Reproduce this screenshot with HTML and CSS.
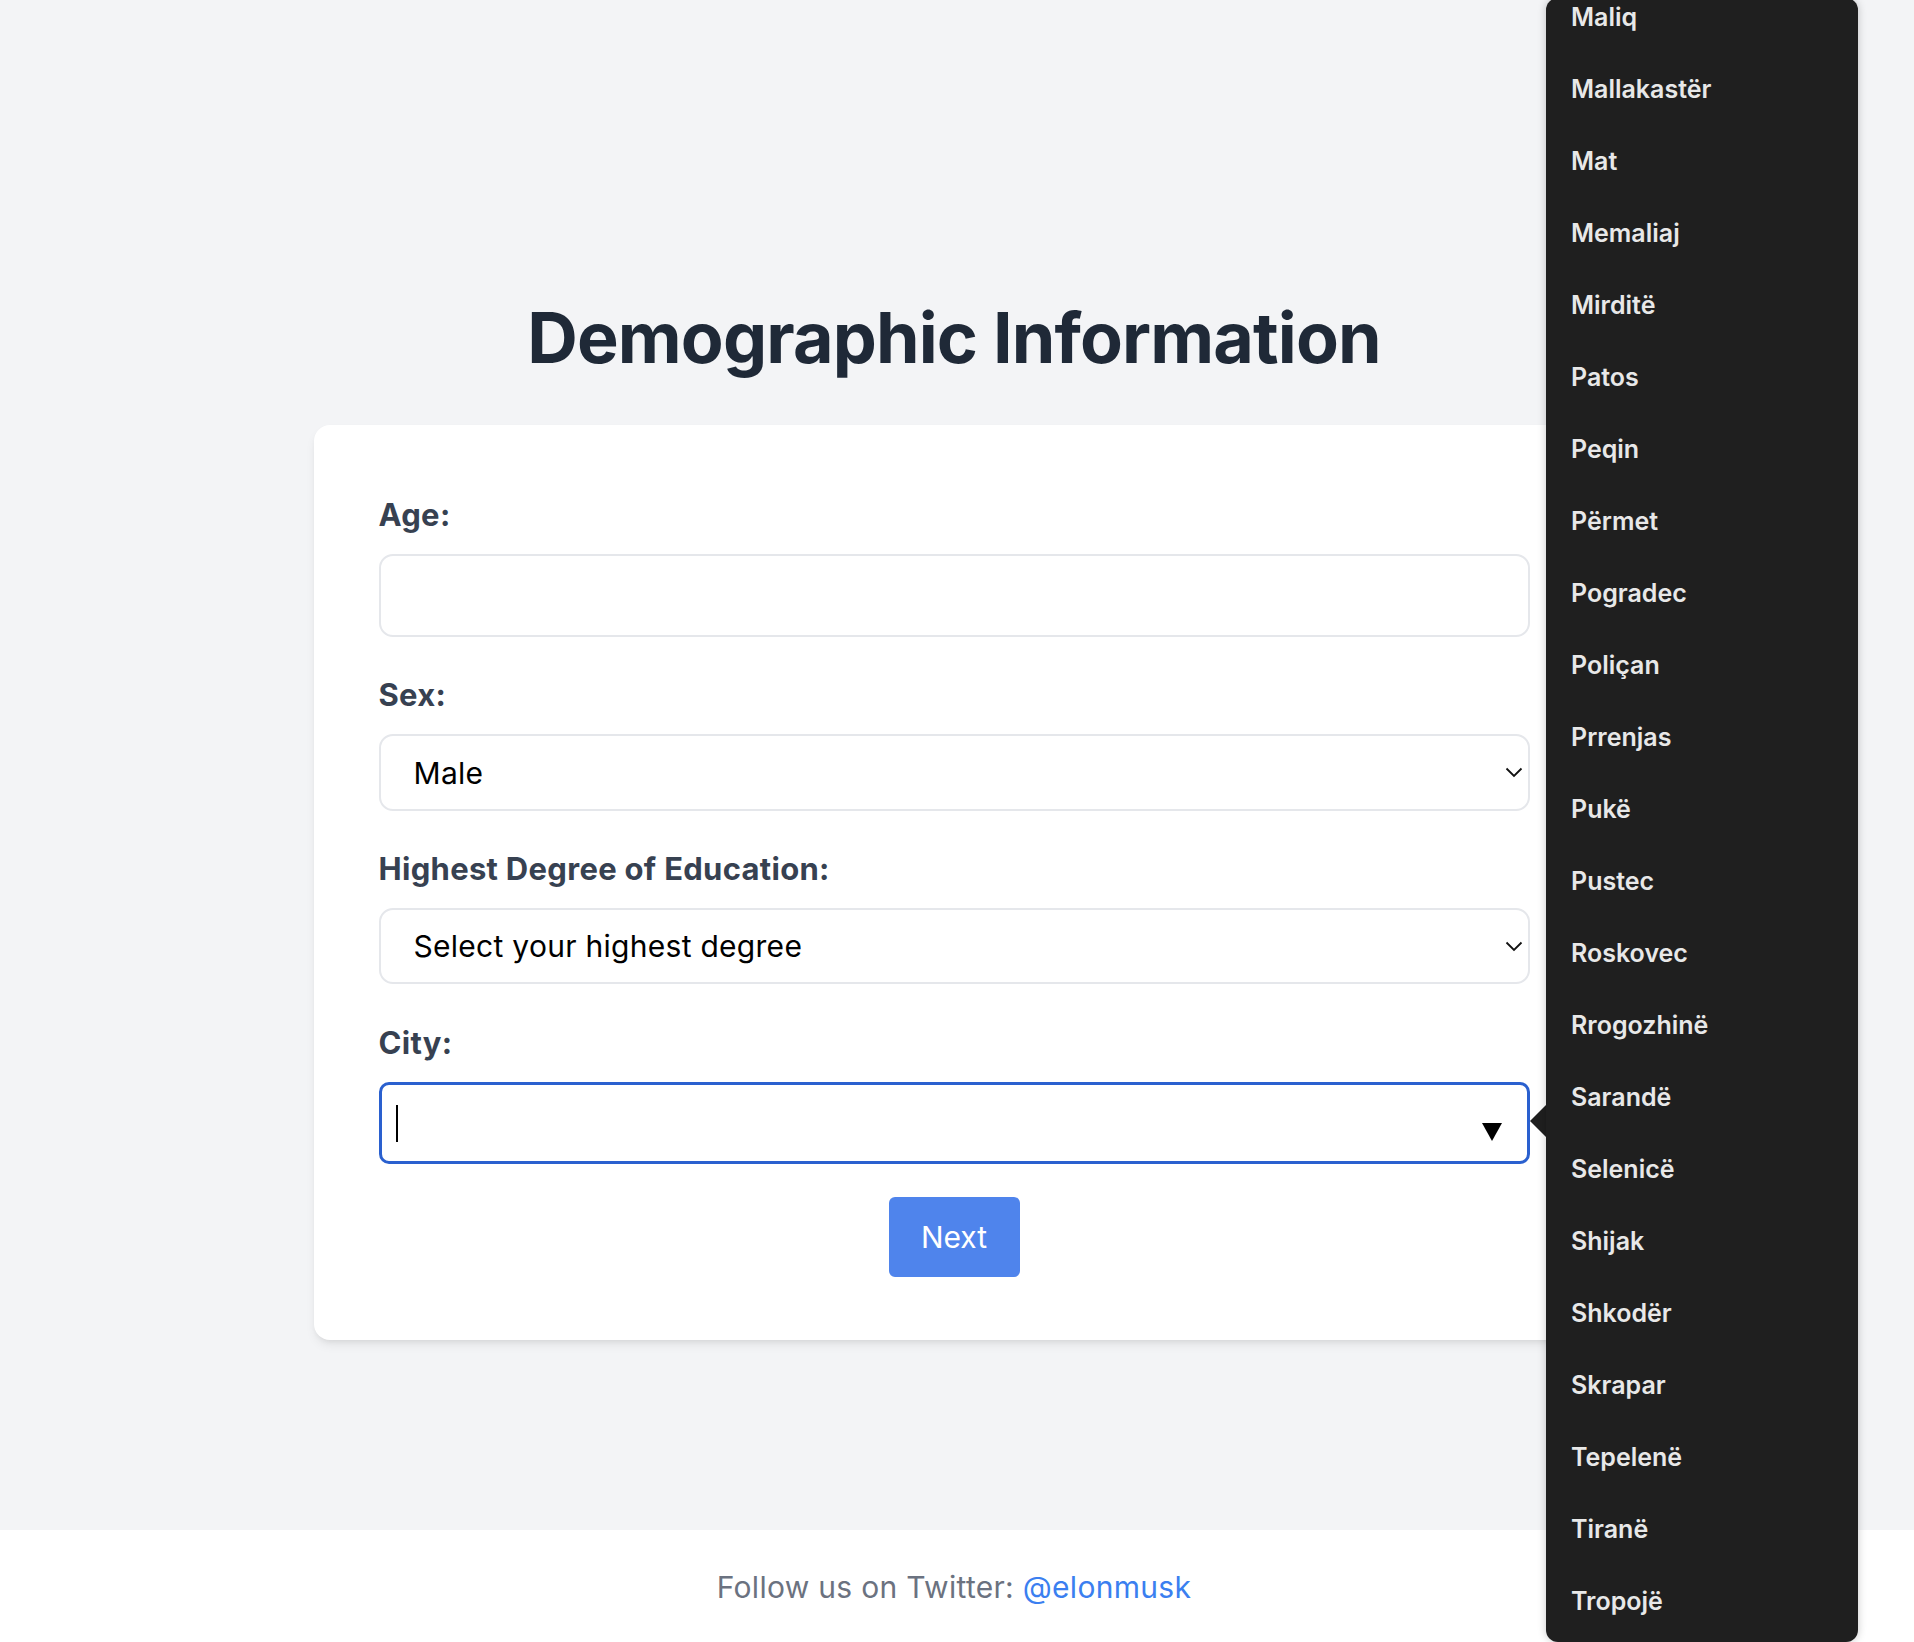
FILE: index.html
```html
<!DOCTYPE html>
<html lang="en">
<head>
<meta charset="utf-8">
<title>Demographic Information</title>
<link rel="stylesheet" href="styles.css">
</head>
<body>
<main class="page">
  <h1 class="title">Demographic Information</h1>
  <form class="card">
    <label class="label" for="age">Age:</label>
    <input class="field field-age" id="age" type="text">

    <label class="label" for="sex">Sex:</label>
    <div class="select-wrap">
      <select class="field field-select" id="sex">
        <option>Male</option>
        <option>Female</option>
      </select>
      <svg class="chevron" width="18" height="11" viewBox="0 0 18 11"><path d="M1.5 1.5 L9 9 L16.5 1.5" fill="none" stroke="#111" stroke-width="1.8"/></svg>
    </div>

    <label class="label" for="edu">Highest Degree of Education:</label>
    <div class="select-wrap select-wrap-edu">
      <select class="field field-select" id="edu">
        <option>Select your highest degree</option>
      </select>
      <svg class="chevron" width="18" height="11" viewBox="0 0 18 11"><path d="M1.5 1.5 L9 9 L16.5 1.5" fill="none" stroke="#111" stroke-width="1.8"/></svg>
    </div>

    <label class="label" for="city">City:</label>
    <div class="city-wrap">
      <input class="field field-city" id="city" type="text" list="cities">
      <span class="caret"></span>
      <svg class="datalist-arrow" width="20" height="18" viewBox="0 0 20 18"><polygon points="0,0 20,0 10,18" fill="#000"/></svg>
    </div>

    <div class="actions">
      <button class="btn" type="button">Next</button>
    </div>
  </form>
</main>
<footer class="footer">
  <p class="footer-text">Follow us on Twitter: <a class="footer-link" href="#">@elonmusk</a></p>
</footer>

<div class="popup-arrow"></div>
<div class="popup">
  <ul class="popup-list">
    <li>Maliq</li>
    <li>Mallakastër</li>
    <li>Mat</li>
    <li>Memaliaj</li>
    <li>Mirditë</li>
    <li>Patos</li>
    <li>Peqin</li>
    <li>Përmet</li>
    <li>Pogradec</li>
    <li>Poliçan</li>
    <li>Prrenjas</li>
    <li>Pukë</li>
    <li>Pustec</li>
    <li>Roskovec</li>
    <li>Rrogozhinë</li>
    <li>Sarandë</li>
    <li>Selenicë</li>
    <li>Shijak</li>
    <li>Shkodër</li>
    <li>Skrapar</li>
    <li>Tepelenë</li>
    <li>Tiranë</li>
    <li>Tropojë</li>
  </ul>
</div>
</body>
</html>
```

FILE: styles.css
```css
html, body {
  margin: 0;
  padding: 0;
}

body {
  font-family: Inter, "Noto Sans", "Liberation Sans", sans-serif;
  background: #ffffff;
  position: relative;
  height: 1642px;
  overflow: hidden;
}

.page {
  background: #f3f4f6;
  height: 1530px;
  box-sizing: border-box;
  padding: 303px 6px 0 0;
}

.title {
  margin: 0 0 52px;
  font-size: 70px;
  line-height: 70px;
  font-weight: 700;
  letter-spacing: -0.85px;
  color: #1f2937;
  text-align: center;
}

.card {
  width: 1281px;
  margin: 0 auto;
  box-sizing: border-box;
  padding: 67px 65px 63px;
  background: #ffffff;
  border-radius: 16px;
  box-shadow: 0 6px 12px -3px rgba(0, 0, 0, 0.10), 0 3px 6px -3px rgba(0, 0, 0, 0.08);
}

.label {
  display: block;
  font-size: 31px;
  line-height: 45px;
  font-weight: 700;
  letter-spacing: 0.3px;
  color: #374151;
  margin-bottom: 17px;
}

.field {
  display: block;
  width: 100%;
  box-sizing: border-box;
  font-family: inherit;
  font-size: 30px;
  letter-spacing: 0.28px;
  color: #000;
  background: #fff;
  border: 2px solid #e5e7eb;
  border-radius: 14px;
  outline: none;
  margin: 0;
}

.field-age {
  height: 83px;
  margin-bottom: 35px;
}

.select-wrap {
  position: relative;
  margin-bottom: 35px;
}

.select-wrap-edu {
  margin-bottom: 36px;
}

.field-select {
  height: 77px;
  appearance: none;
  -webkit-appearance: none;
  padding: 0 0 0 33px;
}

.select-wrap-edu .field-select {
  height: 76px;
}

.chevron {
  position: absolute;
  right: 7px;
  top: 33px;
}

.city-wrap {
  position: relative;
  margin-bottom: 33px;
}

.field-city {
  height: 82px;
  border: 3.5px solid #2a60cf;
  border-radius: 10px;
  padding: 0 0 0 17px;
}

.caret {
  position: absolute;
  left: 17px;
  top: 23px;
  width: 2px;
  height: 37px;
  background: #000;
}

.datalist-arrow {
  position: absolute;
  right: 28px;
  top: 41px;
}

.actions {
  display: flex;
  justify-content: center;
}

.btn {
  width: 131px;
  height: 80px;
  border: none;
  border-radius: 6px;
  background: #4f84ec;
  color: #ffffff;
  font-family: inherit;
  font-size: 30px;
  font-weight: 400;
  padding: 0;
}

.footer {
  height: 112px;
  box-sizing: border-box;
  padding: 35px 6px 0 0;
  background: #ffffff;
}

.footer-text {
  margin: 0;
  text-align: center;
  font-size: 30px;
  line-height: 45px;
  letter-spacing: 0.3px;
  color: #6b7280;
}

.footer-link {
  color: #3b7ff0;
  text-decoration: none;
}

.popup {
  position: absolute;
  left: 1546px;
  top: -2px;
  width: 312px;
  height: 1644px;
  background: #1f1f1f;
  border-radius: 12px;
  box-shadow: 0 0 8px rgba(0, 0, 0, 0.22);
  overflow: hidden;
}

.popup-arrow {
  position: absolute;
  left: 1530px;
  top: 1105px;
  width: 0;
  height: 0;
  border-top: 16px solid transparent;
  border-bottom: 16px solid transparent;
  border-right: 16px solid #1f1f1f;
}

.popup-list {
  list-style: none;
  margin: -17px 0 0;
  padding: 0;
}

.popup-list li {
  height: 72px;
  line-height: 72px;
  padding-left: 25px;
  font-size: 25px;
  font-weight: 600;
  color: #e8e8e8;
  white-space: nowrap;
}
```
